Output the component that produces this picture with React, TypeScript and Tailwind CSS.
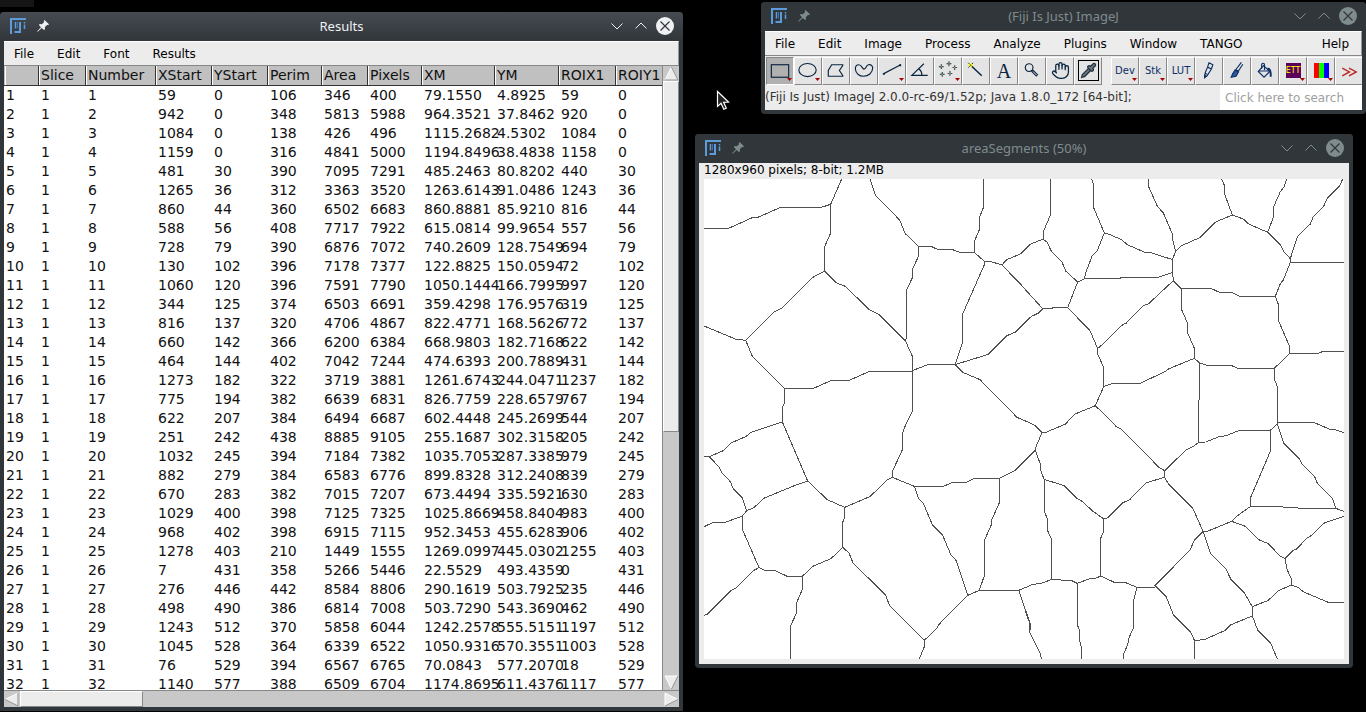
import type { ReactNode } from "react";
import { Hand, Pipette } from "lucide-react";

const columns = [
  { name: "", width: "w-[34px]" },
  { name: "Slice", width: "w-[47px]" },
  { name: "Number", width: "w-[70px]" },
  { name: "XStart", width: "w-[56px]" },
  { name: "YStart", width: "w-[56px]" },
  { name: "Perim", width: "w-[54px]" },
  { name: "Area", width: "w-[46px]" },
  { name: "Pixels", width: "w-[54px]" },
  { name: "XM", width: "w-[73px]" },
  { name: "YM", width: "w-[64px]" },
  { name: "ROIX1", width: "w-[57px]" },
  { name: "ROIY1", width: "" },
];

// XStart YStart Perim Area Pixels XM YM ROIX1 ROIY1
const measurements = `59 0 106 346 400 79.1550 4.8925 59 0
942 0 348 5813 5988 964.3521 37.8462 920 0
1084 0 138 426 496 1115.2682 4.5302 1084 0
1159 0 316 4841 5000 1194.8496 38.4838 1158 0
481 30 390 7095 7291 485.2463 80.8202 440 30
1265 36 312 3363 3520 1263.6143 91.0486 1243 36
860 44 360 6502 6683 860.8881 85.9210 816 44
588 56 408 7717 7922 615.0814 99.9654 557 56
728 79 390 6876 7072 740.2609 128.7549 694 79
130 102 396 7178 7377 122.8825 150.0594 72 102
1060 120 396 7591 7790 1050.1444 166.7995 997 120
344 125 374 6503 6691 359.4298 176.9576 319 125
816 137 320 4706 4867 822.4771 168.5626 772 137
660 142 366 6200 6384 668.9803 182.7168 622 142
464 144 402 7042 7244 474.6393 200.7889 431 144
1273 182 322 3719 3881 1261.6743 244.0471 1237 182
775 194 382 6639 6831 826.7759 228.6579 767 194
622 207 384 6494 6687 602.4448 245.2699 544 207
251 242 438 8885 9105 255.1687 302.3158 205 242
1032 245 394 7184 7382 1035.7053 287.3385 979 245
882 279 384 6583 6776 899.8328 312.2408 839 279
670 283 382 7015 7207 673.4494 335.5921 630 283
1029 400 398 7125 7325 1025.8669 458.8404 983 400
968 402 398 6915 7115 952.3453 455.6283 906 402
1278 403 210 1449 1555 1269.0997 445.0302 1255 403
7 431 358 5266 5446 22.5529 493.4359 0 431
276 446 442 8584 8806 290.1619 503.7925 235 446
498 490 386 6814 7008 503.7290 543.3690 462 490
1243 512 370 5858 6044 1242.2578 555.5151 1197 512
1045 528 364 6339 6522 1050.9316 570.3551 1003 528
76 529 394 6567 6765 70.0843 577.2070 18 529
1140 577 388 6509 6704 1174.8695 611.4376 1117 577`
  .split("\n")
  .map((line, i) => [String(i + 1), "1", String(i + 1), ...line.split(" ")]);

function FijiLogo() {
  return (
    <svg width="16" height="16" viewBox="0 0 16 16" fill="none" stroke="#5c9cdb" aria-hidden="true">
      <path d="M16 1H1V16" strokeWidth="2" />
      <path d="M5.500 4V10.500M14.500 4V5.500M14.500 6.500V11" strokeWidth="1.500" />
      <path d="M10 4V14H4.500" strokeWidth="2" />
      <path d="M7.500 4V10.500" stroke="#3f71a6" />
    </svg>
  );
}

function PinIcon() {
  return (
    <svg width="12" height="12" viewBox="0 0 12 12" fill="currentColor" aria-hidden="true">
      <path d="M7.500 0L12 4.300L11 5.200L10.200 4.800L7.800 7.200L8 9.300L7 10L4.700 7.900L0.700 11.700L0.200 11.300L4 7.200L1.900 5L2.700 4L4.900 4.200L7.200 1.900L6.700 0.900Z" />
    </svg>
  );
}

function TitleBar({ title, active = false }: { title: string; active?: boolean }) {
  return (
    <header
      className={
        active
          ? "flex h-[29px] shrink-0 items-center bg-linear-to-b from-[#454b51] to-[#31363b] pb-0.5 text-[#eff0f1]"
          : "flex h-[29px] shrink-0 items-center bg-[#31363b] pb-0.5 text-[#7f8c8d]"
      }
    >
      <div className="flex w-20 items-center gap-[11px] pl-2.5">
        <FijiLogo />
        <button type="button" aria-label="Keep on all desktops">
          <PinIcon />
        </button>
      </div>
      <h2 className="flex-1 pt-0.5 text-center font-['Noto_Sans',sans-serif] text-[13px] leading-[27px]">{title}</h2>
      <div className="flex w-20 items-center justify-end gap-1.5 pr-[9px]">
        <button type="button" aria-label="Minimize">
          <svg width="18" height="18" viewBox="0 0 18 18" fill="none" stroke="currentColor">
            <path d="M3.500 6.500L9 12L14.500 6.500" />
          </svg>
        </button>
        <button type="button" aria-label="Maximize">
          <svg width="18" height="18" viewBox="0 0 18 18" fill="none" stroke="currentColor">
            <path d="M3.500 11.500L9 6L14.500 11.500" />
          </svg>
        </button>
        <button type="button" aria-label="Close">
          <svg width="18" height="18" viewBox="0 0 18 18" fill="none">
            <circle cx="9" cy="9" r="9" fill="currentColor" />
            <path d="M4.500 4.500L13.500 13.500M13.500 4.500L4.500 13.500" stroke="#31363b" strokeWidth="1.200" />
          </svg>
        </button>
      </div>
    </header>
  );
}

function MenuBar({ items, help = false }: { items: string[]; help?: boolean }) {
  return (
    <nav className="flex h-[25px] shrink-0 items-center border-t border-r border-b border-t-white border-r-[#999] border-b-[#888] bg-[#ececec] text-xs text-black">
      {items.map((item) => (
        <button key={item} type="button" className="pr-3 pl-[11px] first:pl-2.5">
          {item}
        </button>
      ))}
      {help && (
        <button type="button" className="ml-auto px-3">
          Help
        </button>
      )}
    </nav>
  );
}

function ScrollArrow({ label, points, edge }: { label: string; points: string; edge: string }) {
  return (
    <button type="button" aria-label={label} className="block h-[15px] w-[15px] shrink-0">
      <svg width="15" height="15" viewBox="0 0 15 15">
        <polygon points={points} fill="#ececec" stroke="#fff" />
        <path d={edge} stroke="#888" fill="none" />
      </svg>
    </button>
  );
}

function ResultsWindow() {
  return (
    <section className="flex h-full w-1/2 shrink-0 flex-col overflow-hidden rounded-t-[4px] bg-[#31363b]">
      <TitleBar title="Results" active />
      <div className="mx-1 mb-1 flex min-h-0 flex-1 flex-col bg-white">
        <MenuBar items={["File", "Edit", "Font", "Results"]} />
        <div className="flex min-h-0 flex-1">
          <div className="min-w-0 flex-1 overflow-hidden">
            <table className="w-full table-fixed border-separate border-spacing-0 text-left text-sm leading-[19px] text-[#111]">
              <thead>
                <tr className="h-5 bg-[#c0c0c0]">
                  {columns.map((column) => (
                    <th
                      key={column.name}
                      scope="col"
                      className={`${column.width} border-b border-[#333] p-0 font-normal`}
                    >
                      <div className="h-[19px] border-l border-[#333] [tr>:first-child>&]:border-transparent">
                        <div className="h-[19px] border-l border-white pl-px leading-[19px] [tr>:first-child>&]:border-transparent">
                          {column.name}
                        </div>
                      </div>
                    </th>
                  ))}
                </tr>
              </thead>
              <tbody>
                {measurements.map((row) => (
                  <tr key={row[0]} className="h-[19px]">
                    {row.map((cell, i) => (
                      <td key={i} className="p-0 pl-[3px] whitespace-nowrap first:pl-0.5">
                        {cell}
                      </td>
                    ))}
                  </tr>
                ))}
              </tbody>
            </table>
          </div>
          <div className="flex w-[17px] shrink-0 flex-col items-center border-l border-[#888] bg-[#c8c8c8]">
            <ScrollArrow label="Scroll up" points="7.500,1 14,14 1,14" edge="M14 14H1M7.500 1L14 14" />
            <div className="h-[351px] w-full border border-white border-r-[#888] border-b-[#888] bg-[#ececec]" />
            <div className="mt-auto">
              <ScrollArrow label="Scroll down" points="1,1 14,1 7.500,14" edge="M14 1L7.500 14" />
            </div>
          </div>
        </div>
        <div className="flex h-[17px] shrink-0 items-center border-t border-[#888] bg-[#c8c8c8]">
          <ScrollArrow label="Scroll left" points="1,7.500 14,1 14,14" edge="M14 1V14L1 7.500" />
          <div className="ml-px h-full w-[123px] border border-white border-r-[#888] border-b-[#888] bg-[#ececec]" />
          <div className="ml-auto">
            <ScrollArrow label="Scroll right" points="1,1 14,7.500 1,14" edge="M1 14L14 7.500" />
          </div>
        </div>
      </div>
    </section>
  );
}

function ToolIcon({ children }: { children: ReactNode }) {
  return (
    <svg width="27" height="27" viewBox="0 0 27 27" fill="none" stroke="#0a2440" strokeWidth="1.200">
      {children}
    </svg>
  );
}

function Tool({
  label,
  children,
  menu = false,
  pressed = false,
}: {
  label: string;
  children: ReactNode;
  menu?: boolean;
  pressed?: boolean;
}) {
  return (
    <button
      type="button"
      aria-label={label}
      className={
        pressed
          ? "relative flex h-7 w-7 shrink-0 items-center justify-center border border-[#888] border-r-white border-b-white bg-[#b0b0b0]"
          : "relative flex h-7 w-7 shrink-0 items-center justify-center border border-white border-r-[#888] border-b-[#888] bg-[#e4e4e4]"
      }
    >
      {children}
      {menu && (
        <svg className="absolute right-px bottom-[3px]" width="5" height="3" viewBox="0 0 5 3">
          <path d="M0 0H5L2.500 3Z" fill="#a80000" />
        </svg>
      )}
    </button>
  );
}

const pointMarks = [
  [6, 9],
  [14, 6],
  [20, 10],
  [7, 17],
  [15, 16],
];

function Toolbar() {
  return (
    <div className="flex h-[29px] items-center bg-[#ececec] pl-px text-[#0c2f66]">
      <Tool label="Rectangle" menu pressed>
        <ToolIcon>
          <rect x="4.500" y="7.500" width="18" height="13" />
        </ToolIcon>
      </Tool>
      <Tool label="Oval" menu>
        <ToolIcon>
          <ellipse cx="13" cy="13" rx="9" ry="6.800" />
        </ToolIcon>
      </Tool>
      <Tool label="Polygon">
        <ToolIcon>
          <path d="M9 7.500H20.500V8.500L17 13.500L20.500 18.500V19.500H5.500V13.500Z" />
        </ToolIcon>
      </Tool>
      <Tool label="Freehand">
        <ToolIcon>
          <path d="M13.500 12C11.500 12 11.500 7.500 8 7.500C5.500 7.500 4.500 10 4.500 12C5 17 9 19.500 13 19.500C18 19.500 22.500 16 22.500 11C22.500 8.500 20.500 7 18 7.500C15.500 8 16 12 13.500 12Z" />
        </ToolIcon>
      </Tool>
      <Tool label="Line" menu>
        <ToolIcon>
          <path d="M4.500 17L22.500 7.500" />
          <path d="M4 16H6V18H4ZM21 7H23V9H21Z" fill="#0a2440" stroke="none" />
        </ToolIcon>
      </Tool>
      <Tool label="Angle">
        <ToolIcon>
          <path d="M17.500 6.500L5 18.500H21.500M12.500 12C14.500 13.500 15.500 15.500 15.500 18.500" />
        </ToolIcon>
      </Tool>
      <Tool label="Multi-point" menu>
        <ToolIcon>
          {pointMarks.map(([x, y]) => (
            <g key={`${x}-${y}`} stroke="none">
              <path d={`M${x - 2} ${y}h5v1h-5zM${x} ${y - 2}h1v5h-1z`} fill="#0a2440" />
              <rect x={x} y={y} width="1" height="1" fill="#ff0" />
            </g>
          ))}
        </ToolIcon>
      </Tool>
      <Tool label="Wand">
        <ToolIcon>
          <path d="M9 9L19.500 19" strokeWidth="1.500" />
          <path d="M5.500 5.500L10.500 10.500M10.500 5.500L5.500 10.500" strokeWidth="1" />
          <path d="M8 5.500L10.500 8L8 10.500L5.500 8Z" fill="#ff0" stroke="none" />
          <path d="M7.500 7.500H8.500V8.500H7.500Z" strokeWidth="0.500" />
        </ToolIcon>
      </Tool>
      <Tool label="Text">
        <span className="font-['Liberation_Serif',serif] text-xl leading-6 text-[#0a2440]">A</span>
      </Tool>
      <Tool label="Magnifier">
        <ToolIcon>
          <circle cx="10.500" cy="10.500" r="4" />
          <path d="M13.500 13.500L19 19" strokeWidth="3" />
          <path d="M14.500 14.500L18.500 18.500" strokeWidth="1" stroke="#e4e4e4" />
        </ToolIcon>
      </Tool>
      <Tool label="Scrolling">
        <Hand size={19} strokeWidth={1.6} color="#0a2440" />
      </Tool>
      <Tool label="Color picker">
        <span className="flex h-[21px] w-[21px] items-center justify-center border border-black">
          <Pipette size={17} strokeWidth={1.8} color="#22303c" fill="#6b7680" />
        </span>
      </Tool>
      <div className="flex flex-1 pl-[9px]">
        <Tool label="Developer menu" menu>
          <span className="text-[10px]">Dev</span>
        </Tool>
        <Tool label="Stacks menu" menu>
          <span className="text-[10px]">Stk</span>
        </Tool>
        <Tool label="LUT menu" menu>
          <span className="text-[10px]">LUT</span>
        </Tool>
        <Tool label="Pencil">
          <ToolIcon>
            <path
              d="M13.500 5.500L17.500 7.500L16 12L11.500 19L9 20.500L9.500 16L12 10ZM12 10L16 12M9.500 16L11.500 17.500"
              stroke="#0c2f66"
            />
            <path d="M9 21V18.500L10.500 19.500Z" fill="#0c2f66" stroke="#0c2f66" />
          </ToolIcon>
        </Tool>
        <Tool label="Paintbrush">
          <ToolIcon>
            <g stroke="#0c2f66">
              <path d="M18 5L12 13M19.500 7L15 14M12 12.500L15.500 14.500" />
              <path d="M11.500 13L15 15L12.500 19.500L7.500 20.500L9 17Z" fill="#2c5aa0" />
            </g>
          </ToolIcon>
        </Tool>
        <Tool label="Flood fill">
          <ToolIcon>
            <g stroke="#0c2f66">
              <path d="M12 8.500L18.500 14.500L12.500 20.500L6.500 14.500ZM7 14H18" />
              <path d="M10 12V7.500C10 5.500 13 5.500 13 7.500V13" />
              <path d="M16 11.500C19 12 19.500 13.500 19.500 20" strokeWidth="2" />
            </g>
          </ToolIcon>
        </Tool>
        <Tool label="Tissue analyzer" menu>
          <span className="flex h-[15px] w-[15px] items-center justify-center overflow-hidden bg-[#5b005b] text-[8px] leading-none text-[#ff0]">
            ETT
          </span>
        </Tool>
        <Tool label="Channels" menu>
          <span className="flex h-[15px] w-[15px]">
            <span className="flex-1 bg-[#f00]" />
            <span className="flex-1 bg-[#0f0]" />
            <span className="flex-1 bg-[#00f]" />
          </span>
        </Tool>
        <Tool label="More tools">
          <ToolIcon>
            <path d="M6.500 11L14 15L6.500 19M13.500 11L21 15L13.500 19" stroke="#b22" strokeWidth="1.400" />
          </ToolIcon>
        </Tool>
      </div>
    </div>
  );
}

function ImageJWindow() {
  return (
    <section className="ml-[78px] overflow-hidden rounded-[4px] bg-[#31363b]">
      <TitleBar title="(Fiji Is Just) ImageJ" />
      <div className="mx-1 mb-1 overflow-hidden">
        <MenuBar
          items={["File", "Edit", "Image", "Process", "Analyze", "Plugins", "Window", "TANGO"]}
          help
        />
        <Toolbar />
        <div className="flex h-[25px] bg-[#ececec] text-xs">
          <output className="flex-1 leading-[25px] whitespace-nowrap text-[#333]">
            (Fiji Is Just) ImageJ 2.0.0-rc-69/1.52p; Java 1.8.0_172 [64-bit];
          </output>
          <input
            type="search"
            aria-label="Search"
            placeholder="Click here to search"
            className="w-[142px] bg-white px-[5px] text-black outline-none placeholder:text-[#a0a0a0]"
          />
        </div>
      </div>
    </section>
  );
}

// Cell boundaries, one list of polylines per quadrant of the picture.
const boundaries = [
  {
    shift: "translate(-27 -12)",
    d: `M27 160L101 160L172 128L186 128L255 98L376 98L407 88
M440 12L407 88L407 174L389 215L389 289
M525 12L541 61L614 135L630 175L671 214
M389 289L425 324L451 334L524 405L552 419L631 497
M389 289L355 306L262 398L238 410L152 496
M27 453L121 492L152 496L172 544L268 640L268 686L262 697L262 741
M268 640L356 640L409 616L463 616L521 590L652 590
M671 214L671 243L653 281L653 306L634 347L634 488L631 497L653 546L653 706L633 748L628 756
M652 587L698 569L780 569
M671 214L708 214L727 223L770 223L795 232L838 232L869 260L892 261L921 270
M865 12L865 98L853 128L853 164L839 197L839 232
M869 260L869 267L803 417L803 502L780 569
M921 270L935 254L976 237L1005 208
M921 270L1005 357
M780 569L880 538L936 482L962 471L1005 427
M780 569L803 592L855 614L966 727L1005 744`,
  },
  {
    shift: "translate(963 -12)",
    d: `M15 208L37 199L55 193L55 170L76 121L76 12
M55 193L66 201L78 227L111 261L122 288L158 321
M158 321L128 398L82 398L82 401L53 401L0 343
M53 401L39 415L20 424L0 441
M200 12L206 30L206 98L238 174L217 226L201 244L184 288L178 311L158 321
M178 311L285 311L287 307L398 307L443 292
M238 174L250 177L290 194L307 209L357 231L378 233L443 254
M371 12L371 35L397 94L415 114L442 177L444 199L452 228L443 252L443 292L445 317
M452 228L470 212L524 188L572 141L622 120
M590 12L598 31L599 57L622 120L655 132L671 147L728 172L767 211L775 228L796 251
M785 12L778 34L766 50L746 95L746 124L728 172
M953 12L944 33L907 70L896 94L864 127L856 147L817 185L796 251L796 262L957 262
M796 262L775 315L766 326L751 364L645 364L622 353L583 352L560 341L469 341L445 317L371 386L355 392L303 445L294 448L224 516L217 518
M128 398L195 467L217 518L219 540L236 577L236 635L211 692
M236 635L260 626L343 626L420 590L432 581L508 550
M469 341L469 402L487 443L489 476L508 520L508 550L523 563L547 571L618 571L638 580L748 580L793 536L793 513L761 438L760 388L751 364
M793 536L877 536L892 530L957 530
M748 580L749 615L757 635L757 747
M523 563L523 674L521 676L521 801
M211 692L150 717L130 737
M211 692L257 737`,
  },
  {
    shift: "translate(-27 723)",
    d: `M27 110L43 110L85 92L108 69L154 49L166 38L262 6L338 183L397 239L449 262L526 229L576 180L592 172
M43 110L72 141L80 158L106 185L114 205L142 234L155 272L142 288L91 307L55 307L27 320
M155 272L177 263L206 235L293 199L338 183
M142 288L142 328L192 443L175 452L122 505L108 511L38 582L27 586
M192 443L210 451L240 452L277 469L322 469L353 439L408 416L443 382L443 307L449 292L449 262
M322 469L322 508L305 548L305 578L287 617L287 717
M443 382L462 399L474 429L571 524L584 557L688 661L688 680L673 717
M633 13L623 38L623 87L592 155L592 172L658 199L746 199L772 187L813 187L838 175L913 175L960 151L1021 90
M658 199L670 234L685 250L712 314L742 344L768 405L783 421L818 526L730 615L726 624L688 661
M913 175L913 248L891 298L889 314L869 360L869 464L853 511L818 526
M853 511L971 511L1005 497
M971 511L1005 609L1005 630`,
  },
  {
    shift: "translate(963 723)",
    d: `M15 9L28 15L51 38L33 80L31 90
M51 38L65 36L122 12L132 0
M31 90L46 133L47 150L57 178L57 270L67 297L68 332L79 357L79 478
M57 178L117 197L155 235L169 242L204 274L235 296
M15 497L22 493L45 491L79 479L138 481L157 490L192 477L212 475L227 468L268 487L302 488L336 502L390 502
M235 296L235 336L227 355L227 468
M235 296L247 294L292 249L314 239L364 188L419 172
M255 0L273 19L289 28L403 143L419 152L419 172L430 191L504 266L534 334
M419 152L482 91L506 79L521 67L542 66L582 50L603 47L643 31L736 31L757 12
M736 31L736 94L677 232L677 259L640 285L620 304L547 334L534 334
M757 0L757 12L776 69L823 116L832 133L869 170L876 188L922 235L932 265L957 274
M757 8L868 8L915 28L930 29L957 38
M677 259L771 259L775 262L815 262L822 265L932 265
M957 289L898 309L855 350L846 354L815 387L803 392L780 415L765 408L730 371L701 359L661 319L620 304
M780 415L786 448L800 478L800 495L760 512L730 541L682 560
M800 495L820 503L836 516L910 547L957 547
M534 334L509 359L495 390L390 497L424 531L446 586L498 638L509 663L509 717
M534 334L556 400L603 447L618 479L658 519L682 560L682 588L698 630L737 669L757 717
M682 588L618 614L599 632L542 657L509 663
M157 490L157 615L163 628L164 660L170 687L170 717
M336 502L326 540L326 622L311 656L308 674L295 704L295 717
M0 569L13 607L14 638L45 700L50 717`,
  },
];

function ImageWindow() {
  return (
    <section className="mt-5 mr-[13px] ml-3 overflow-hidden rounded-[4px] bg-[#31363b]">
      <TitleBar title="areaSegments (50%)" />
      <div className="mx-1 mb-1 bg-[#ececec] px-[5px] pb-[5px]">
        <p className="h-4 text-xs leading-[14px] text-black">1280x960 pixels; 8-bit; 1.2MB</p>
        <svg
          className="block aspect-[4/3] w-full bg-white"
          viewBox="0 0 1920 1440"
          fill="none"
          stroke="#505050"
          strokeWidth="3"
          shapeRendering="crispEdges"
          role="img"
          aria-label="Segmented cell boundaries"
        >
          {boundaries.map((part) => (
            <path key={part.shift} transform={part.shift} d={part.d} />
          ))}
        </svg>
      </div>
    </section>
  );
}

export default function App() {
  return (
    <main className="relative flex h-screen min-h-[680px] overflow-hidden bg-black pb-px font-['DejaVu_Sans',sans-serif]">
      <div className="absolute top-0 left-0 h-[7px] w-[34px] bg-[#151515]" />
      <div className="flex w-full pt-3">
        <ResultsWindow />
        <div className="-mt-2.5 min-w-0 flex-1">
          <ImageJWindow />
          <ImageWindow />
        </div>
      </div>
      <svg className="absolute top-[90px] left-[716px]" width="14" height="21" viewBox="0 0 14 21" aria-hidden="true">
        <path
          d="M1.500 1.500V16.500L5 13.300L7.800 19.300L10.300 18.200L7.600 12.300L12.500 12Z"
          fill="#222"
          stroke="#fff"
          strokeWidth="1.200"
        />
      </svg>
    </main>
  );
}
